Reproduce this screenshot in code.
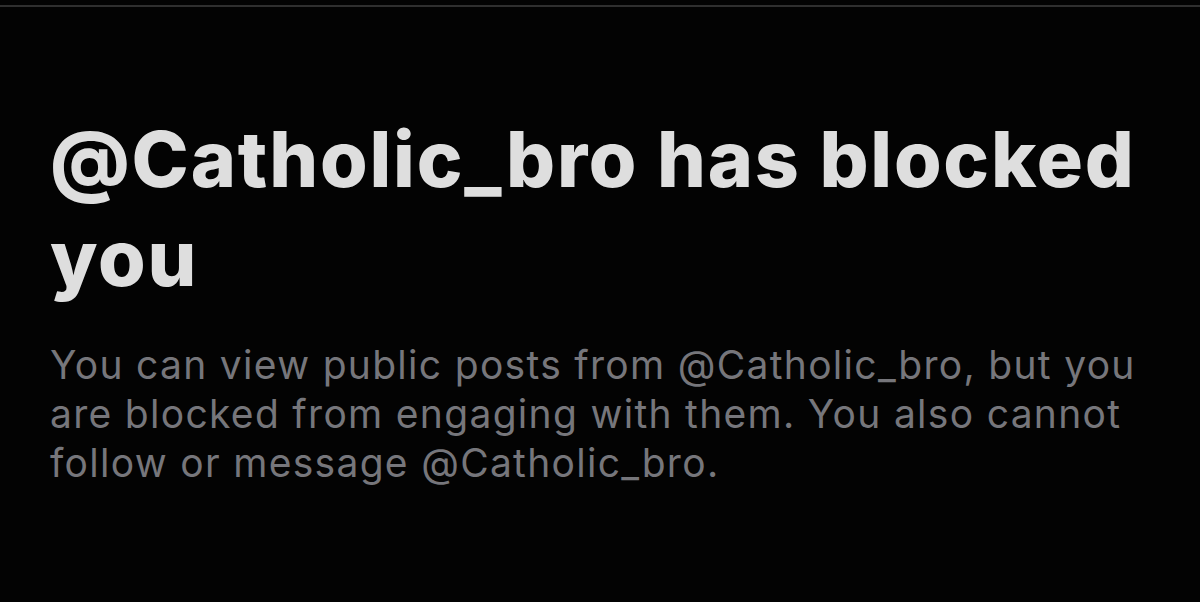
export default function App() {
  return (
    <div className="w-[1200px] h-[602px] bg-[#030303] overflow-hidden" style={{ fontFamily: "Inter, 'Noto Sans', sans-serif" }}>
      <div className="h-[5px]" />
      <div className="h-[2px] bg-[#2f2f2f]" />
      <div className="pl-[50px] pr-[40px] pt-[103px]">
        <h1 className="text-[77px] leading-[99px] font-extrabold text-[#dedede] tracking-[1.8px]">
          @Catholic_bro has blocked you
        </h1>
        <p className="mt-[32px] text-[39px] leading-[49px] text-[#76767b] w-[1100px] tracking-[1.3px]">
          You can view public posts from @Catholic_bro, but you are blocked from engaging with them. You also cannot follow or message @Catholic_bro.
        </p>
      </div>
    </div>
  );
}
